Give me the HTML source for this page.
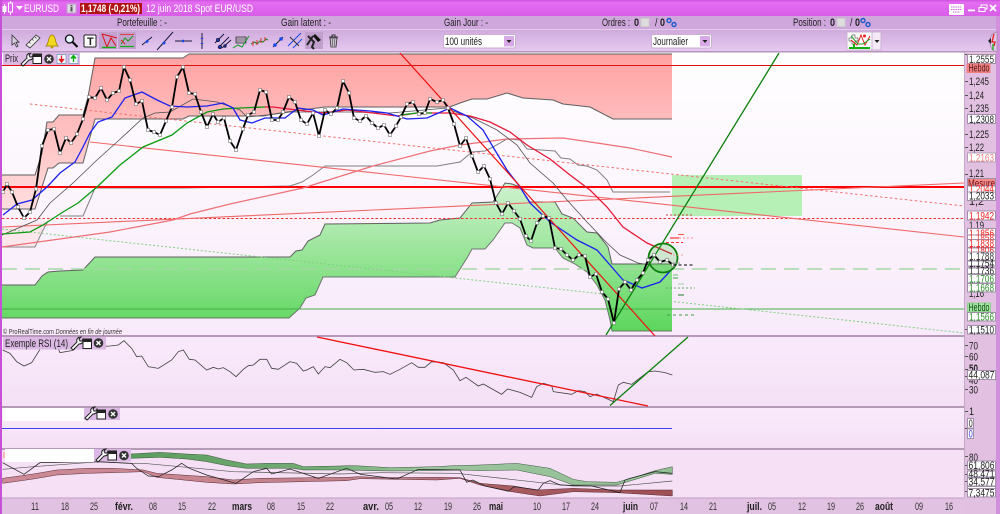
<!DOCTYPE html>
<html><head><meta charset="utf-8"><style>
html,body{margin:0;padding:0;background:#f8eafa;width:1000px;height:514px;overflow:hidden}
svg{display:block}
text{font-family:"Liberation Sans",sans-serif;font-size:11px;fill:#222}
.w{fill:#fff}
.b{font-weight:bold}
.d text{font-size:11px;fill:#333}
.d text.b{fill:#222}
.g{fill:none;stroke:#606060;stroke-width:1}
.s{fill:none}
.bx rect{fill:#fff;stroke:#a090a8;stroke-width:1}
</style></head><body>
<svg width="1000" height="514" viewBox="0 0 1000 514" xmlns="http://www.w3.org/2000/svg">
<defs>
<linearGradient id="t" x1="0" y1="0" x2="0" y2="1"><stop offset="0" stop-color="#cf52de"/><stop offset=".15" stop-color="#e36cf0"/><stop offset="1" stop-color="#d85ee8"/></linearGradient>
<linearGradient id="r3" x1="0" y1="0" x2="0" y2="1"><stop offset="0" stop-color="#cfabdd"/><stop offset="1" stop-color="#e6caf0"/></linearGradient>
<linearGradient id="p1" x1="0" y1="0" x2="0" y2="1"><stop offset="0" stop-color="#ffffff"/><stop offset="1" stop-color="#f8eafa"/></linearGradient>
<linearGradient id="p2" x1="0" y1="0" x2="0" y2="1"><stop offset="0" stop-color="#f9eafb"/><stop offset="1" stop-color="#f5e0f6"/></linearGradient>
<linearGradient id="cr" gradientUnits="userSpaceOnUse" x1="0" y1="54" x2="0" y2="209"><stop offset="0" stop-color="#ffa2a2"/><stop offset="1" stop-color="#ffdedf"/></linearGradient>
<linearGradient id="cg" gradientUnits="userSpaceOnUse" x1="0" y1="183" x2="0" y2="331"><stop offset="0" stop-color="#d0f2d0"/><stop offset="1" stop-color="#5cd65c"/></linearGradient>
<linearGradient id="bg" gradientUnits="userSpaceOnUse" x1="390" y1="0" x2="2017" y2="0"><stop offset="0" stop-color="#5c9c5e"/><stop offset=".35" stop-color="#74ac76"/><stop offset=".55" stop-color="#9cc49e"/><stop offset="1" stop-color="#94bf96"/></linearGradient>
<linearGradient id="br" gradientUnits="userSpaceOnUse" x1="0" y1="0" x2="2017" y2="0"><stop offset="0" stop-color="#cc8a96"/><stop offset=".6" stop-color="#c08088"/><stop offset=".75" stop-color="#a85c62"/><stop offset="1" stop-color="#9e5056"/></linearGradient>
<marker id="m" viewBox="0 0 8 8" markerWidth="4" markerHeight="4" refX="4" refY="4" markerUnits="userSpaceOnUse"><rect x="1" y="1" width="6" height="6" fill="#fff" stroke="#777" stroke-width="1.200"/></marker>
</defs>

<!-- window chrome -->
<rect width="1000" height="514" fill="#e2c0e2"/>
<rect width="1000" height="16" fill="url(#t)"/>
<rect y="16" width="1000" height="13" fill="#cfa7dc"/>
<rect y="29" width="1000" height="1.500" fill="#e4cdea"/>
<rect y="30" width="1000" height="22" fill="url(#r3)"/>
<rect y="51" width="1000" height="1.500" fill="#b896c0"/>
<rect y="0" width="2" height="514" fill="#c850d8"/>
<rect x="996" y="16" width="4" height="498" fill="#d090dc"/>

<!-- panels -->
<rect x="2" y="52" width="962" height="283" fill="url(#p1)"/>
<rect x="2" y="337" width="962" height="69" fill="url(#p2)"/>
<rect x="2" y="408" width="962" height="40" fill="url(#p2)"/>
<rect x="2" y="450" width="962" height="48" fill="#f6e0f6"/>
<rect x="2" y="498" width="962" height="16" fill="#e2c2e2"/>
<rect x="964" y="52" width="32" height="462" fill="#e2c0e2"/>
<rect x="2" y="335" width="962" height="2" fill="#b898ba"/>
<rect x="2" y="406" width="962" height="2" fill="#b59ab8"/>
<rect x="2" y="448" width="962" height="2" fill="#b59ab8"/>
<rect x="2" y="497.500" width="962" height="1" fill="#c0a0c4"/>
<rect x="964" y="52" width="1" height="446" fill="#c4a8c8"/>

<!-- red cloud -->
<path d="M2 175H35L42 153 47 122H53L59 115H83L88 97 95 58H183L189 54H672V119H613L590 107 563 104 553 100 523 98 507 93 487 99H472L460 103 450 107H325L280 113 263 116H189L183 119H95L83 163H59L53 168H48L42 187 35 209H2Z" fill="url(#cr)"/>
<path class="g" d="M2 175H35L42 153 47 122H53L59 115H83L88 97 95 58H183L189 54H672"/>
<path class="g" d="M2 209H35L42 187 48 168H53L59 163H83L95 119H183L189 116H263L280 113 325 107H450L460 103 472 99H487L507 93 523 98 553 100 563 104 590 107 613 119H672"/>
<path d="M60 216H83L95 188H183L290 186 302 182 313 175 325 166H437L460 162 472 152 485 151 493 147 507 139 520 140 527 149 555 151 561 158 570 159 578 165 587 166 597 170 607 180 613 192H670" class="g" style="stroke:#808080"/>
<path d="M2 247H35L48 221 38 222 2 228Z" fill="#fce6ec"/>
<path d="M2 247H35L42 232 48 221" class="g" style="stroke:#888"/>

<!-- green cloud -->
<rect x="672" y="175" width="130" height="41" fill="#b6f0b6"/>
<path d="M2 285H35L42 276 48 272 60 271 83 270 95 257H290L296 251 302 250 308 241 320 235 325 224 430 223 440 220 460 218 472 203 493 202 505 183 512 184 520 187 530 202H555L562 214 573 218 587 232 597 233 608 247 612 264H672V331H612L610 320 605 300 597 285 587 272 575 264 563 258 555 248H533L527 245 520 228 512 223H505L493 240 485 249H472L467 258 455 277H323L315 295 306 298 300 308 289 318H2Z" fill="url(#cg)"/>
<path class="g" d="M2 285H35L42 276 48 272 60 271 83 270 95 257H290L296 251 302 250 308 241 320 235 325 224 430 223 440 220 460 218 472 203 493 202 505 183 512 184 520 187 530 202H555L562 214 573 218 587 232 597 233 608 247 612 264H672"/>
<path class="g" d="M2 318H289L300 308 306 298 315 295 323 277H455L467 258 472 249H485L493 240 505 223H512L520 228 527 245 533 248H555L563 258 575 264 587 272 597 285 605 300 610 320 612 331H672" stroke-opacity=".85"/>

<!-- horizontals -->
<line x1="2" y1="65.500" x2="964" y2="65.500" stroke="#e01010"/>
<line x1="2" y1="269" x2="964" y2="269" stroke="#a4d8a4" stroke-width="1.400" stroke-dasharray="15 8"/>
<line x1="2" y1="309" x2="964" y2="309" stroke="#46b046" stroke-width="1.100"/>
<line x1="2" y1="218.500" x2="964" y2="218.500" stroke="#f03030" stroke-dasharray="2.500 2"/>
<line x1="2" y1="187" x2="964" y2="187" stroke="#ff0000" stroke-width="2"/>

<!-- trend lines -->
<line x1="2" y1="227" x2="964" y2="183" stroke="#f06868" stroke-width="1.100"/>
<line x1="90" y1="142" x2="964" y2="237" stroke="#f06868" stroke-width="1.100"/>
<line x1="30" y1="104" x2="964" y2="206" stroke="#f47070" stroke-dasharray="2.500 2.500"/>
<line x1="2" y1="229" x2="964" y2="333" stroke="#80d080" stroke-dasharray="2 2"/>

<polyline class="s" stroke="#ee7076" stroke-width="1.200" points="2,247 67,238 110,232 173,220 190,214 230,204 303,188 373,166 430,151 460,145 507,139 563,138 597,143 630,148 672,157"/>
<polyline class="s" stroke="#505050" stroke-width=".8" points="2,235 37,220 50,203 73,183 97,160 117,142 143,118 155,113 170,112 193,99 217,102 240,110 247,117 267,115 290,112 317,112 350,112 390,113 447,108 450,110 473,118 497,130 517,145 530,163 553,183 567,200 587,222 607,243 620,255 638,263 650,265"/>
<polyline class="s" stroke="#0c9a14" stroke-width="1.300" points="2,234 30,232 43,225 63,212 78,203 97,187 120,165 143,147 172,135 187,123 207,112 223,109 240,108 265,107"/>
<polyline class="s" stroke="#e81838" stroke-width="1.300" points="265,107 273,107 297,110 323,113 347,110 373,113 397,116 417,113 440,113 450,113 470,116 490,122 510,132 527,145 550,159 570,175 590,190 607,207 623,227 647,243 672,254"/>
<polyline class="s" stroke="#0c9a14" stroke-width="1.300" points="400,115 417,113 432,113"/>
<polyline class="s" stroke="#1c20f0" stroke-width="1.300" points="3,215 17,204 32,200 47,187 60,173 75,162 83,147 90,133 98,122 112,117 125,98 142,92 157,100 170,106 187,107 207,106 223,103 233,108 240,120 252,123 265,118 285,118 298,108 313,110 323,115 343,109 370,111 387,113 407,119 427,118 450,108 467,116 483,130 493,147 507,170 520,187 530,203 550,222 577,240 597,250 610,265 623,280 642,288 660,282 673,268"/>
<line x1="400" y1="53" x2="655" y2="336" stroke="#ee1010" stroke-width="1.200"/>
<line x1="606" y1="335" x2="779" y2="53" stroke="#0a800a" stroke-width="1.300"/>
<circle cx="663" cy="258" r="14.500" fill="#30c030" fill-opacity=".22" stroke="#0a800a" stroke-width="1.800"/>

<!-- price line -->
<polyline class="s" stroke="#000" stroke-width="1.800" stroke-linejoin="round" marker-start="url(#m)" marker-mid="url(#m)" marker-end="url(#m)" points="3,192 7,184 12,192 18,207 24,218 30,212 36,189 42,146 48,130 54,129 60,153 66,138 71,143 77,134 83,119 89,97 95,98 101,88 107,100 113,93 119,91 124,67 130,80 136,104 142,101 148,130 154,132 160,135 166,121 172,107 177,77 183,67 189,93 195,94 201,112 207,127 213,114 218,122 224,118 230,141 236,150 243,129 248,115 254,112 260,90 266,92 272,120 278,120 283,112 289,97 295,102 301,120 307,124 313,113 319,136 325,110 331,114 337,108 343,81 349,93 354,118 360,121 366,116 372,123 378,128 384,125 390,135 396,126 401,117 407,104 413,102 419,114 425,113 430,99 437,102 443,100 448,108 454,124 460,146 466,138 472,156 478,172 484,166 490,179 496,203 502,214 508,203 514,211 520,219 526,236 531,241 537,223 543,216 549,218 555,248 561,249 567,255 573,260 579,255 585,256 590,277 596,274 602,292 608,299 614,323 619,289 625,282 631,290 637,280 643,273 648,260 654,255 660,262 667,260 673,265"/>

<!-- right small dashes -->
<g fill="none" stroke-width="1">
<path d="M666 215H693" stroke="#d04040" stroke-dasharray="2 2"/>
<path d="M678 234.500H684" stroke="#ff5050"/>
<path d="M670 238H679" stroke="#ff1010"/><path d="M679 238H695" stroke="#ff9090" stroke-dasharray="2 2"/>
<path d="M666 242.500H683" stroke="#ff3030" stroke-dasharray="3 2"/>
<path d="M673 255H685" stroke="#f0a0a0" stroke-dasharray="2 2"/>
<path d="M673 263H680" stroke="#999"/>
<path d="M673 265H695" stroke="#000" stroke-dasharray="3 2.500"/>
<path d="M673 275H678" stroke="#70c070"/>
<path d="M673 278H678" stroke="#40a040"/>
<path d="M678 284H684" stroke="#a0d0a0"/>
<path d="M666 288H695" stroke="#60b060" stroke-dasharray="2 2"/>
<path d="M678 295H684" stroke="#208020"/>
<path d="M667 315H695" stroke="#40a040" stroke-dasharray="3 3"/>
</g>

<!-- RSI -->
<g transform="translate(0,320) scale(.33333)" fill="none" stroke="#404040" stroke-width="2.400">
<polyline points="8,90 30,100 50,125 72,138 95,128 120,88 140,60 170,75 180,98 215,92 240,82 260,76 290,80 330,78 355,75 372,62 395,85 410,110 425,108 445,140 475,145 515,120 535,95 550,90 568,118 585,120 620,150 640,142 655,147 670,143 690,155 708,170 730,148 745,137 760,135 780,118 800,118 815,145 835,148 870,125 890,130 910,153 920,150 940,140 955,162 975,140 990,143 1020,118 1040,128 1062,150 1090,148 1125,157 1150,155 1170,163 1200,148 1235,128 1255,142 1275,142 1295,125 1330,128 1360,150 1380,182 1398,172 1435,198 1450,192 1505,223 1523,207 1560,217 1595,232 1610,200 1630,190 1655,197 1660,215 1715,223 1735,212 1755,215 1770,230 1790,222 1840,245 1855,195 1870,187 1895,193 1945,155 1965,153 1995,158 2017,165"/>
</g>
<line x1="317" y1="337" x2="648" y2="406" stroke="#f01010" stroke-width="1.300"/>
<line x1="610" y1="405.500" x2="688" y2="337" stroke="#0a800a" stroke-width="1.300"/>

<!-- panel 3 -->
<line x1="2" y1="428.500" x2="672" y2="428.500" stroke="#4040f4" stroke-width="1"/>

<!-- panel 4 -->
<g transform="translate(0,320) scale(.33333)">
<path d="M392 402 480 397 560 402 620 405 680 420 740 432 800 430 880 430 910 440 1020 438 1040 437 1065 437 1170 443 1310 440 1360 437 1440 435 1550 430 1650 445 1720 478 1760 485 1850 487 1900 473 1965 452 2017 440V463L1965 460 1900 480 1850 495H1720L1650 470 1550 450 1440 452 1380 450 1310 452 1170 453 1020 450 910 450 880 445H740L680 437 620 425 560 417 480 412 392 415Z" fill="url(#bg)" stroke="#305030" stroke-width="1.400"/>
<path d="M8 475 100 462 170 450 260 445 340 445 430 450 470 460 620 470 700 480 780 475 1040 472 1080 470 1140 473 1310 472 1380 473 1440 490 1540 498 1610 510 1720 505 1850 510 2017 510V528L1850 518 1720 515 1620 528 1520 513 1440 495 1380 475 1310 480 1080 476 1040 482 780 488 700 492 620 487 470 472 430 455 340 458 260 460 170 465 100 477 8 490Z" fill="url(#br)" stroke="#502028" stroke-width="1.400"/>
<polyline fill="none" stroke="#555" stroke-width="2" points="8,448 100,440 300,425 380,430 430,430 540,440 700,455 1020,462 1140,458 1370,460 1640,490 1720,498 1860,498 2017,483"/>
<polyline fill="none" stroke="#222" stroke-width="2.200" points="8,428 30,440 72,463 120,428 280,425 395,430 410,445 445,468 475,470 515,450 545,430 568,445 620,465 708,490 760,455 800,445 815,462 870,447 955,475 1040,445 1082,463 1190,477 1255,448 1380,450 1400,487 1418,480 1455,498 1525,513 1543,500 1615,510 1630,490 1650,482 1680,495 1775,498 1860,518 1875,480 1890,475 1965,455 2017,460"/>
</g>

<!-- date axis -->
<g class="d">
<text x="31" y="510" textLength="8" lengthAdjust="spacingAndGlyphs">11</text><text x="61" y="510" textLength="8" lengthAdjust="spacingAndGlyphs">18</text><text x="90" y="510" textLength="8" lengthAdjust="spacingAndGlyphs">25</text>
<text x="115" y="510" textLength="18" class="b" lengthAdjust="spacingAndGlyphs">févr.</text>
<text x="149" y="510" textLength="8" lengthAdjust="spacingAndGlyphs">08</text><text x="178" y="510" textLength="8" lengthAdjust="spacingAndGlyphs">15</text><text x="208" y="510" textLength="8" lengthAdjust="spacingAndGlyphs">22</text>
<text x="232" y="510" textLength="20" class="b" lengthAdjust="spacingAndGlyphs">mars</text>
<text x="267" y="510" textLength="8" lengthAdjust="spacingAndGlyphs">08</text><text x="297" y="510" textLength="8" lengthAdjust="spacingAndGlyphs">15</text><text x="326" y="510" textLength="8" lengthAdjust="spacingAndGlyphs">22</text>
<text x="363" y="510" textLength="16" class="b" lengthAdjust="spacingAndGlyphs">avr.</text>
<text x="385" y="510" textLength="8" lengthAdjust="spacingAndGlyphs">05</text><text x="414" y="510" textLength="8" lengthAdjust="spacingAndGlyphs">12</text><text x="444" y="510" textLength="8" lengthAdjust="spacingAndGlyphs">19</text><text x="473" y="510" textLength="8" lengthAdjust="spacingAndGlyphs">26</text>
<text x="489" y="510" textLength="14" class="b" lengthAdjust="spacingAndGlyphs">mai</text>
<text x="533" y="510" textLength="8" lengthAdjust="spacingAndGlyphs">10</text><text x="562" y="510" textLength="8" lengthAdjust="spacingAndGlyphs">17</text><text x="591" y="510" textLength="8" lengthAdjust="spacingAndGlyphs">24</text>
<text x="623" y="510" textLength="15" class="b" lengthAdjust="spacingAndGlyphs">juin</text>
<text x="650" y="510" textLength="8" lengthAdjust="spacingAndGlyphs">07</text><text x="680" y="510" textLength="8" lengthAdjust="spacingAndGlyphs">14</text><text x="709" y="510" textLength="8" lengthAdjust="spacingAndGlyphs">21</text>
<text x="747" y="510" textLength="15" class="b" lengthAdjust="spacingAndGlyphs">juil.</text>
<text x="768" y="510" textLength="8" lengthAdjust="spacingAndGlyphs">05</text><text x="798" y="510" textLength="8" lengthAdjust="spacingAndGlyphs">12</text><text x="827" y="510" textLength="8" lengthAdjust="spacingAndGlyphs">19</text><text x="856" y="510" textLength="8" lengthAdjust="spacingAndGlyphs">26</text>
<text x="875" y="510" textLength="18" class="b" lengthAdjust="spacingAndGlyphs">août</text>
<text x="915" y="510" textLength="8" lengthAdjust="spacingAndGlyphs">09</text><text x="945" y="510" textLength="8" lengthAdjust="spacingAndGlyphs">16</text>
</g>

<!-- axis ticks -->
<path d="M965 54.500h3M965 81.500h3M965 95.500h3M965 108.500h3M965 134.500h3M965 147.500h3M965 174.500h3M965 329.500h3M965 345.500h3M965 356.500h3M965 369.500h3M965 376.500h3M965 389.500h3M965 411.500h3M965 428.500h3M965 456.500h3M965 465.500h3M965 474.500h3M965 481.500h3M965 491.500h3" stroke="#555" stroke-width="1"/>

<!-- axis labels: painted top to bottom, later boxes cover earlier ones -->
<g class="bx">
<rect x="967.500" y="54.500" width="28" height="9"/><text x="969" y="63" textLength="25" lengthAdjust="spacingAndGlyphs" style="fill:#333">1,2555</text>
<text x="969" y="85" textLength="20" lengthAdjust="spacingAndGlyphs">1,245</text>
<text x="969" y="99" textLength="15" lengthAdjust="spacingAndGlyphs">1,24</text>
<text x="969" y="112" textLength="20" lengthAdjust="spacingAndGlyphs">1,235</text>
<rect x="967.500" y="114.500" width="28" height="9"/><text x="969" y="123" textLength="25" lengthAdjust="spacingAndGlyphs">1,2308</text>
<text x="969" y="138" textLength="20" lengthAdjust="spacingAndGlyphs">1,225</text>
<text x="969" y="151" textLength="15" lengthAdjust="spacingAndGlyphs">1,22</text>
<rect x="967.500" y="153" width="28" height="9" style="stroke:#b0a0b8"/><text x="969" y="161.500" textLength="25" lengthAdjust="spacingAndGlyphs" style="fill:#f08080">1,2163</text>
<text x="969" y="177" textLength="15" lengthAdjust="spacingAndGlyphs">1,21</text>
<rect x="967.500" y="178.500" width="28" height="7" style="fill:#f48c8c"/><text x="968" y="187" textLength="27" lengthAdjust="spacingAndGlyphs" style="fill:#701010">Mesure</text>
<rect x="967.500" y="186" width="28" height="7"/><text x="969" y="192.500" textLength="25" lengthAdjust="spacingAndGlyphs" style="fill:#ff2020">1,2044</text>
<text x="969" y="205" textLength="15" lengthAdjust="spacingAndGlyphs">1,2</text>
<rect x="967.500" y="192" width="28" height="8.500"/><text x="969" y="199.500" textLength="25" lengthAdjust="spacingAndGlyphs">1,2033</text>
<rect x="967.500" y="211" width="28" height="9"/><text x="969" y="219.500" textLength="25" lengthAdjust="spacingAndGlyphs" style="fill:#f02020">1,1942</text>
<text x="969" y="229" textLength="15" lengthAdjust="spacingAndGlyphs">1,19</text>
<rect x="967.500" y="228.500" width="28" height="7"/><text x="969" y="237" textLength="25" lengthAdjust="spacingAndGlyphs" style="fill:#f02020">1,1856</text>
<rect x="967.500" y="235" width="28" height="5"/><text x="969" y="241.500" textLength="25" lengthAdjust="spacingAndGlyphs" style="fill:#f03030">1,1858</text>
<rect x="967.500" y="239.500" width="28" height="8"/><text x="969" y="247" textLength="25" lengthAdjust="spacingAndGlyphs" style="fill:#f02020">1,1838</text>
<rect x="967.500" y="248" width="28" height="4"/><text x="969" y="254" textLength="25" lengthAdjust="spacingAndGlyphs" style="fill:#f02020">1,1806</text>
<rect x="967.500" y="252" width="28" height="8.500"/><text x="969" y="260" textLength="25" lengthAdjust="spacingAndGlyphs" style="fill:#333">1,1788</text>
<rect x="967.500" y="261" width="28" height="5"/><text x="969" y="267" textLength="25" lengthAdjust="spacingAndGlyphs">1,1754</text>
<rect x="967.500" y="268" width="28" height="6"/><text x="969" y="274.500" textLength="25" lengthAdjust="spacingAndGlyphs">1,1736</text>
<rect x="967.500" y="274.500" width="28" height="8.500"/><text x="969" y="282.500" textLength="25" lengthAdjust="spacingAndGlyphs" style="fill:#309030">1,1706</text>
<text x="969" y="297" textLength="15" lengthAdjust="spacingAndGlyphs">1,16</text>
<rect x="967.500" y="283.500" width="28" height="8.500"/><text x="969" y="291.500" textLength="25" lengthAdjust="spacingAndGlyphs" style="fill:#309030">1,1668</text>
<rect x="967.500" y="303" width="23" height="8.500" style="fill:#a0e8a0;stroke:#90d090"/><text x="968.500" y="311" textLength="21" lengthAdjust="spacingAndGlyphs" style="fill:#104010">Hebdo</text>
<rect x="967.500" y="312.500" width="28" height="8.500"/><text x="969" y="320.500" textLength="25" lengthAdjust="spacingAndGlyphs" style="fill:#309030">1,1566</text>
<rect x="967.500" y="325.500" width="28" height="8.500"/><text x="969" y="333.500" textLength="25" lengthAdjust="spacingAndGlyphs">1,1510</text>
<rect x="967" y="64" width="23" height="8.500" style="fill:#f08080;stroke:#f08080"/><text x="968.500" y="71.500" textLength="21" lengthAdjust="spacingAndGlyphs" style="fill:#501818">Hebdo</text>

<text x="969" y="349.500" textLength="9" lengthAdjust="spacingAndGlyphs">70</text>
<text x="969" y="360.500" textLength="9" lengthAdjust="spacingAndGlyphs">60</text>
<text x="969" y="372" textLength="9" lengthAdjust="spacingAndGlyphs" class="b">50</text>
<text x="969" y="384" textLength="9" lengthAdjust="spacingAndGlyphs">40</text>
<rect x="967.500" y="370.500" width="28" height="9"/><text x="968.500" y="378.500" textLength="26" lengthAdjust="spacingAndGlyphs">44,087</text>
<text x="969" y="393.500" textLength="9" lengthAdjust="spacingAndGlyphs">30</text>
<text x="969" y="415" textLength="5" lengthAdjust="spacingAndGlyphs">1</text>
<rect x="967.500" y="418.500" width="6" height="9.500"/><text x="968.700" y="427" textLength="4" lengthAdjust="spacingAndGlyphs">0</text>
<rect x="967.500" y="429" width="6" height="9.500"/><text x="968.700" y="437.500" textLength="4" lengthAdjust="spacingAndGlyphs" style="fill:#3030f0">0</text>
<text x="969" y="461" textLength="9" lengthAdjust="spacingAndGlyphs">80</text>
<rect x="967.500" y="461" width="28" height="8.500"/><text x="968.500" y="469" textLength="26" lengthAdjust="spacingAndGlyphs">61,806</text>
<rect x="967.500" y="471" width="28" height="6"/><text x="968.500" y="477.500" textLength="26" lengthAdjust="spacingAndGlyphs">48,471</text>
<rect x="967.500" y="478" width="28" height="8"/><text x="968.500" y="485.500" textLength="26" lengthAdjust="spacingAndGlyphs">34,577</text>
<rect x="967.500" y="486.500" width="28" height="2"/>
<rect x="967.500" y="488.500" width="28" height="8.500"/><text x="968.500" y="496.500" textLength="26" lengthAdjust="spacingAndGlyphs">7,3475</text>
</g>

<!-- panel labels -->
<rect x="3" y="52" width="77" height="13" fill="#dcb8e4"/>
<text x="5" y="62" textLength="13" lengthAdjust="spacingAndGlyphs">Prix</text>
<path d="M21 64l6-6c-1-3 1-5 4-5l-2 2 1 2 2 0 1-2c1 3-1 5-4 5l-6 6z" fill="#fff" stroke="#222"/>
<rect x="33" y="54" width="8.500" height="9.500" fill="#fff" stroke="#222"/><rect x="33" y="54" width="8.500" height="3" fill="#222"/>
<circle cx="49" cy="59" r="4.800" fill="#333"/><path d="M47 57l4 4m0-4l-4 4" stroke="#fff" stroke-width="1.400"/>
<rect x="57" y="54.500" width="9" height="9" fill="#f8f8ff" stroke="#90a8c8"/><path d="M61.500 55.500v5m-2.500-1.500l2.500 3 2.500-3" fill="#e02020" stroke="#e02020" stroke-width="1.400"/>
<rect x="69" y="54.500" width="9" height="9" fill="#f8f8ff" stroke="#90a8c8"/><path d="M73.500 62v-5m-2.500 1.500l2.500-3 2.500 3" fill="#10b010" stroke="#10b010" stroke-width="1.400"/>

<rect x="3" y="337" width="103" height="12.500" fill="#dcb8e4"/>
<text x="5" y="347" textLength="63" lengthAdjust="spacingAndGlyphs">Exemple RSI (14)</text>
<path d="M71 348l6-6c-1-3 1-5 4-5l-2 2 1 2 2 0 1-2c1 3-1 5-4 5l-6 6z" fill="#fff" stroke="#222"/>
<rect x="83" y="339" width="8.500" height="9.500" fill="#fff" stroke="#222"/><rect x="83" y="339" width="8.500" height="3" fill="#222"/>
<circle cx="98.500" cy="343" r="4.800" fill="#333"/><path d="M96.500 341l4 4m0-4l-4 4" stroke="#fff" stroke-width="1.400"/>

<rect x="3" y="408" width="81" height="13" fill="#fff"/>
<rect x="84" y="408" width="36" height="12" fill="#dcb8e4"/>
<path d="M85 418l6-6c-1-3 1-5 4-5l-2 2 1 2 2 0 1-2c1 3-1 5-4 5l-6 6z" fill="#fff" stroke="#222"/>
<rect x="97" y="410" width="8.500" height="9" fill="#fff" stroke="#222"/><rect x="97" y="410" width="8.500" height="3" fill="#222"/>
<circle cx="113" cy="414" r="4.800" fill="#333"/><path d="M111 412l4 4m0-4l-4 4" stroke="#fff" stroke-width="1.400"/>

<rect x="5" y="449" width="89" height="13" fill="#fff"/>
<rect x="3.500" y="452" width="1" height="6" fill="#f09060"/>
<rect x="94" y="449" width="37" height="12.500" fill="#dcb8e4"/>
<path d="M96 460l6-6c-1-3 1-5 4-5l-2 2 1 2 2 0 1-2c1 3-1 5-4 5l-6 6z" fill="#fff" stroke="#222"/>
<rect x="108" y="451" width="8.500" height="9" fill="#fff" stroke="#222"/><rect x="108" y="451" width="8.500" height="3" fill="#222"/>
<circle cx="124" cy="455.500" r="4.800" fill="#333"/><path d="M122 453.500l4 4m0-4l-4 4" stroke="#fff" stroke-width="1.400"/>

<text x="3" y="334" textLength="119" lengthAdjust="spacingAndGlyphs" style="font-size:7px;fill:#333">© ProRealTime.com  <tspan font-style="italic">Données en fin de journée</tspan></text>

<!-- title bar -->
<rect x="2.500" y="6" width="4" height="6" fill="#fff"/>
<rect x="8.500" y="3" width="4" height="9" fill="none" stroke="#fff"/><path d="M10.500 1v2m0 9v3M4.500 4v2m0 6v2" stroke="#fff"/>
<path d="M16 6h7l-3.500 4z" fill="#fff"/>
<text x="24" y="12" textLength="35" class="w" lengthAdjust="spacingAndGlyphs">EURUSD</text>
<rect x="67" y="4" width="9" height="9" fill="#e0d8e8" stroke="#c0a0c8"/><rect x="70.500" y="7" width="2" height="4.500" fill="#555"/><rect x="70.500" y="5" width="2" height="1.300" fill="#555"/>
<rect x="80" y="3" width="62" height="11" fill="#b01414"/>
<text x="81" y="12" textLength="59" class="w b" lengthAdjust="spacingAndGlyphs">1,1748 (-0,21%)</text>
<text x="146" y="12" textLength="107" class="w" lengthAdjust="spacingAndGlyphs">12 juin 2018 Spot EUR/USD</text>
<rect x="949" y="4" width="15" height="11" rx="1" fill="#fff"/><path d="M951 7h11M951 9.500h11M953 12h7" stroke="#c868d8" stroke-width="1" stroke-dasharray="1.500 .7"/>
<rect x="968" y="9.500" width="7" height="1.800" fill="#fff"/>
<path d="M979 7.500h6v4h-6zM981 7.500v-2.500h6v4h-2" fill="none" stroke="#fff"/>
<path d="M990 5l6 6m0-6l-6 6" stroke="#fff" stroke-width="1.800"/>

<!-- row 2 -->
<text x="117" y="26" textLength="50" lengthAdjust="spacingAndGlyphs">Portefeuille : -</text>
<text x="281" y="26" textLength="50" lengthAdjust="spacingAndGlyphs">Gain latent : -</text>
<text x="444" y="26" textLength="44" lengthAdjust="spacingAndGlyphs">Gain Jour : -</text>
<text x="602" y="26" textLength="28" lengthAdjust="spacingAndGlyphs">Ordres :</text>
<text x="634" y="26" textLength="5" lengthAdjust="spacingAndGlyphs" class="b">0</text>
<rect x="641" y="18.500" width="8" height="8" fill="#ddd" stroke="#ccc"/>
<text x="655" y="26" textLength="10" lengthAdjust="spacingAndGlyphs">/ <tspan font-weight="bold">0</tspan></text>
<text x="793" y="26" textLength="33" lengthAdjust="spacingAndGlyphs">Position :</text>
<text x="830" y="26" textLength="5" lengthAdjust="spacingAndGlyphs" class="b">0</text>
<rect x="837" y="18.500" width="8" height="8" fill="#ddd" stroke="#ccc"/>
<text x="850" y="26" textLength="10" lengthAdjust="spacingAndGlyphs">/ <tspan font-weight="bold">0</tspan></text>
<g fill="none" stroke="#1858c8" stroke-width="1.400">
<circle cx="669" cy="20.500" r="2"/><circle cx="674" cy="24.500" r="2"/>
<circle cx="863" cy="20.500" r="2"/><circle cx="868" cy="24.500" r="2"/>
</g>

<!-- toolbar -->
<rect x="99" y="32" width="18" height="17" fill="#c2a0ce"/>
<rect x="118" y="32" width="18" height="17" fill="#c2a0ce"/>
<rect x="305" y="32" width="18" height="17" fill="#c2a0ce"/>
<path d="M12 35l0 10 2.500-2 2 4 1.500-.8-2-4 3 0z" fill="#d8d0e0" stroke="#333" stroke-width=".8"/>
<path d="M26 45l10-10 4 3-10 10z" fill="#eee" stroke="#333" stroke-width=".8"/><path d="M29 42l1.500 1.500M32 39l1.500 1.500M35 37l1.500 1.500" stroke="#333" stroke-width=".7"/>
<path d="M46 46c3-2 2-11 6-11s3 9 6 11z" fill="#f0d820" stroke="#a08000" stroke-width=".8"/><circle cx="52" cy="47" r="1.500" fill="#c0a000"/>
<circle cx="69.500" cy="39" r="4" fill="#e8f4ff" stroke="#111" stroke-width="1.300"/><path d="M72.500 42l5 5" stroke="#111" stroke-width="2.200"/>
<rect x="84" y="35" width="12" height="12" fill="#fff" stroke="#222" rx="1"/><text x="87" y="45" class="b">T</text>
<path d="M102 34l15 4M102 34l5 13 4-9 5 8" fill="none" stroke="#e01010" stroke-width="1"/><path d="M102 47.500h14" stroke="#10b010" stroke-width="1.400"/>
<path d="M120 34.500h14" stroke="#e04040" stroke-width="1"/><path d="M120 46.500h14" stroke="#10b010" stroke-width="1.200"/><path d="M121 44l4-6 3 3 5-5" fill="none" stroke="#10a010"/><path d="M121 40l4 4" stroke="#e02020"/>
<g stroke="#1a1a40" stroke-width="1" fill="#1848e8">
<path d="M142 45l10-8M157 50l16-18M175 41h17M202 33v16" fill="none"/>
<path d="M146 42.500l2-2M163 44l2-2M182 41h2M202 38v1M202 43v1" stroke="#1848e8" stroke-width="2.500"/>
<path d="M215 43l9-9M218 48l11-11M222 48l9-8" fill="none"/><circle cx="218" cy="40" r="1.500"/><circle cx="220" cy="47" r="1.500"/><circle cx="225" cy="46" r="1.200"/>
</g>
<rect x="236" y="37" width="10" height="6" fill="#c8b8d0" stroke="#333" stroke-width=".8"/><path d="M233 48l5-3 4 2 7-11" fill="none" stroke="#10a020"/><path d="M236 39h10M236 41h10" stroke="#333" stroke-width=".5"/>
<path d="M251 44l4-2 2 2 3-3 3 1 3-3 2 1" fill="none" stroke="#208020"/><path d="M253 41v5M257 40v5M261 38v5M265 37v4" stroke="#e03030"/>
<path d="M273 47l10-10" stroke="#222"/><circle cx="275" cy="45" r="1.800" fill="#1848e8"/><circle cx="281" cy="39" r="1.800" fill="#1848e8"/>
<path d="M288 46l13-13M293 48l9-9" stroke="#1848e8" fill="none"/><path d="M290 37l9 9" stroke="#333"/>
<path d="M308 36l6 6-2 5 2 2M313 36l-6 9" stroke="#222" stroke-width="2" fill="none"/><path d="M315 34l6 6-3 2-5-6z" fill="#111"/>
<path d="M329 37h9M332 37v-2h3v2" fill="none" stroke="#333"/><path d="M330 38h7l-1 9h-5z" fill="#c8c0cc" stroke="#333" stroke-width=".8"/><path d="M332.500 39v7M334.500 39v7" stroke="#333" stroke-width=".5"/>

<!-- selects -->
<rect x="443.500" y="34.500" width="72" height="13.500" rx="2" fill="#fff" stroke="#c8b0d0"/>
<rect x="504" y="36" width="10" height="10.500" fill="#d8a8e8"/>
<path d="M506.500 40h5l-2.500 3z" fill="#222"/>
<text x="445" y="45" textLength="37" lengthAdjust="spacingAndGlyphs">100 unités</text>
<rect x="651.500" y="34.500" width="60" height="13.500" rx="2" fill="#fff" stroke="#c8b0d0"/>
<rect x="700" y="36" width="10" height="10.500" fill="#d8a8e8"/>
<path d="M702.500 40h5l-2.500 3z" fill="#222"/>
<text x="653" y="45" textLength="35" lengthAdjust="spacingAndGlyphs">Journalier</text>

<!-- chart button -->
<rect x="847" y="32" width="25" height="18" fill="#fff" stroke="#c8b0d0"/>
<rect x="872" y="32" width="9" height="18" fill="#f4eaf6" stroke="#c8b0d0"/>
<path d="M874.500 40h5l-2.500 3z" fill="#222"/>
<path d="M849 38h3v-3h3v3h3v3h-3v3h-3v-3h-3z" fill="#fff" stroke="#666" stroke-width=".7"/>
<path d="M851 40l6 5 4-10 4 10 5-9" fill="none" stroke="#e02020"/><path d="M851 36l7 8 5 0 7-5" fill="none" stroke="#20a020"/>
<rect x="849" y="47" width="21" height="2" fill="#10b010"/><rect x="853" y="44" width="2" height="4" fill="#10b010"/>
<circle cx="864.500" cy="36" r="1.500" fill="#e02020"/>

<!-- side toggle -->
<path d="M997 32c-5 1-7 5-7 10s2 9 7 10z" fill="#e4c8ec" stroke="#b090b8"/>
<path d="M988 41l3-3v6z" fill="#222"/>
<path d="M994 34l-2 8h3l-1 4" fill="none" stroke="#e02020" stroke-width="1.300"/>
<path d="M993 44v6" stroke="#10b010" stroke-width="1.300"/>

<rect x="2" y="52" width="962" height="1" fill="#c8b0cc" opacity=".7"/>
</svg>
</body></html>
